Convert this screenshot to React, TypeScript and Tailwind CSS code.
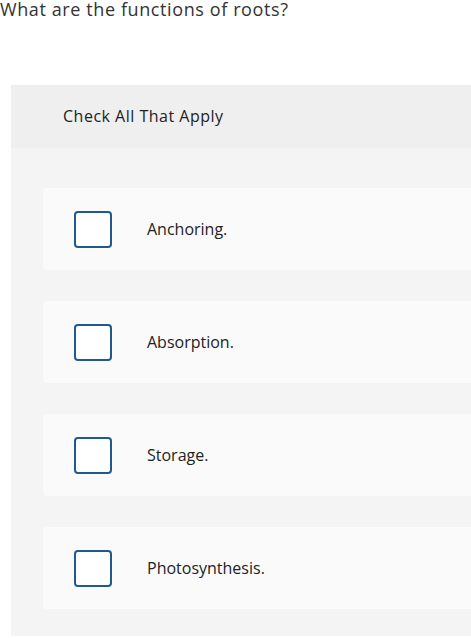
const options = ["Anchoring.", "Absorption.", "Storage.", "Photosynthesis."];

export default function App() {
  return (
    <div
      className="w-[471px] h-[638px] overflow-hidden bg-white text-[#333]"
      style={{ fontFamily: "'Open Sans', 'Liberation Sans', sans-serif" }}
    >
      <h1 className="h-[20px] text-[18px] leading-[18px] tracking-[0.6px] font-normal text-[#333]">
        What are the functions of roots?
      </h1>

      <div className="ml-[11px] mt-[65px] w-[520px] bg-[#f4f4f4]">
        <div className="flex h-[63px] items-center bg-[#efefef] pl-[52px] pb-[1px] text-[16px] tracking-[0.5px] text-[#222]">
          Check All That Apply
        </div>
        <div className="flex flex-col gap-[31px] pl-[32px] pt-[40px] pb-[27px]">
          {options.map((label) => (
            <div
              key={label}
              className="flex h-[82px] items-center rounded-[4px] bg-[#fafafa] pl-[31px]"
            >
              <span className="block h-[37px] w-[38px] shrink-0 rounded-[4px] border-[2.5px] border-[#1f5a8f] bg-white" />
              <span className="ml-[35px] text-[16px] text-[#222]">{label}</span>
            </div>
          ))}
        </div>
      </div>
    </div>
  );
}
